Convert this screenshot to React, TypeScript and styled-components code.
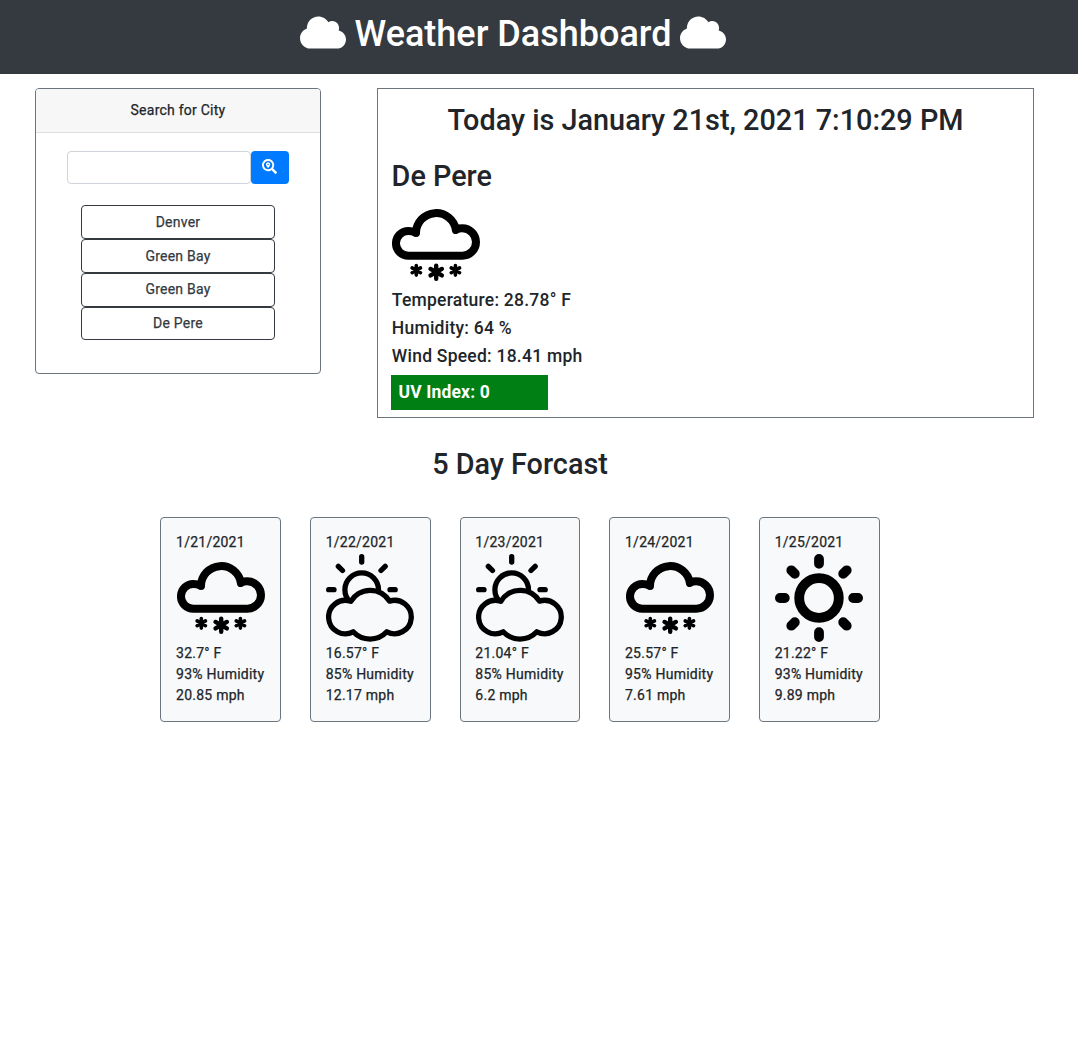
import React from "react";
import styled, { createGlobalStyle } from "styled-components";
import { FaCloud, FaSearchLocation } from "react-icons/fa";

const GlobalStyle = createGlobalStyle`
  *, *::before, *::after { box-sizing: border-box; }
  html { font-size: 14px; }
  body {
    margin: 0;
    background: #fff;
    color: #212529;
    font-family: Roboto, "Liberation Sans", sans-serif;
    font-size: 1rem;
    font-weight: 400;
    line-height: 1.5;
    letter-spacing: 0.24px;
    -webkit-text-stroke-width: 0.25px;
  }
  h1, h2, h3, p {
    margin: 0;
    font-weight: 500;
    line-height: 1.2;
    -webkit-text-stroke-width: 0;
  }
`;

const Header = styled.header`
  display: flex;
  justify-content: center;
  height: 74px;
  padding: 11px 52px 0 0;
  background: #343a40;
  color: #fff;
`;

const Title = styled.h1`
  display: flex;
  gap: 9px;
  height: 44px;
  font-size: 36px;
  line-height: 46px;
  letter-spacing: 0;
  white-space: nowrap;
`;

const CloudIcon = styled(FaCloud)`
  width: 46px;
  height: 37px;
  margin-top: 3px;
`;

const Columns = styled.div`
  display: flex;
  align-items: flex-start;
  gap: 56px;
  padding: 14px 44px 0 35px;
`;

const SearchCard = styled.section`
  width: 286px;
  height: 286px;
  border: 1px solid #6c757d;
  border-radius: 4px;
  overflow: hidden;
`;

const SearchHeading = styled.div`
  height: 44px;
  padding-top: 11px;
  border-bottom: 1px solid #dfdfdf;
  background: #f7f7f7;
  text-align: center;
`;

const SearchForm = styled.div`
  display: flex;
  padding: 18px 31px 0;
`;

const SearchInput = styled.input`
  width: 184px;
  height: 33px;
  padding: 5px 10px;
  border: 1px solid #ced4da;
  border-radius: 4px;
  background: #fff;
  font: inherit;
  outline: none;
`;

const SearchButton = styled.button`
  display: flex;
  justify-content: center;
  width: 38px;
  height: 33px;
  padding: 8px 1px 0 0;
  border: 0;
  border-radius: 4px;
  background: #007bff;
  color: #fff;
  font-size: 15px;
`;

const CityList = styled.div`
  display: flex;
  flex-direction: column;
  width: 194px;
  margin: 21.2px auto 0;
`;

const CityButton = styled.button`
  height: 33.8px;
  padding: 0.5px 0 0;
  border: 1px solid #343a40;
  border-radius: 4px;
  background: transparent;
  color: #343a40;
  font: inherit;
  letter-spacing: inherit;
`;

const TodayPanel = styled.main`
  flex: 1;
  height: 330px;
  padding: 14px 13px 0;
  border: 1px solid #6c757d;
`;

const Heading = styled.h2<{ $center?: boolean }>`
  height: 34px;
  font-size: 28.8px;
  line-height: 34px;
  letter-spacing: 0;
  text-align: ${(p) => (p.$center ? "center" : "left")};
`;

const CityName = styled(Heading)`
  margin: 22px 0 8px;
  padding-left: 0.6px;
`;

const Reading = styled.p`
  height: 21px;
  margin-bottom: 7px;
  padding-left: 0.8px;
  font-size: 17.5px;
  line-height: 21px;
  letter-spacing: 0.24px;
`;

const Readings = styled.div`
  padding-top: 1px;
`;

const WeatherIcon = styled.svg`
  display: block;
  flex: none;
  width: 88px;
  height: 88px;
  margin-left: 0.4px;
  fill: none;
  stroke: #000;
  stroke-linecap: round;
  stroke-linejoin: round;
`;

const TodayIcon = styled.div`
  padding-left: 0.6px;
`;

const UvBadge = styled.div`
  width: 157px;
  height: 35px;
  margin-top: 8px;
  padding-left: 7.5px;
  background: #008014;
  color: #fff;
  font-size: 17.5px;
  font-weight: 700;
  line-height: 34px;
  letter-spacing: 0.15px;
  -webkit-text-stroke-width: 0;
`;

const Forecast = styled.section`
  width: 1040px;
  padding-top: 29px;
`;

const ForecastRow = styled.div`
  display: grid;
  grid-template-columns: repeat(5, 120.67px);
  column-gap: 29px;
  justify-content: center;
  margin-top: 36px;
`;

const DayCard = styled.article`
  height: 205px;
  padding: 14px 0 0 14.7px;
  border: 1px solid #6c757d;
  border-radius: 4px;
  background: #f8f9fa;
  white-space: nowrap;
`;

const DayLine = styled.div`
  height: 21px;
`;

const DayIcon = styled.div`
  height: 90px;
  padding: 1px 0 0 0.3px;
`;

type Kind = "snow" | "partly" | "sun";

const Flake = ({ x, y, r, w }: { x: number; y: number; r: number; w: number }) => (
  <path
    transform={`translate(${x} ${y})`}
    strokeWidth={w}
    d={`M0 ${-r}V${r}M${-r * 0.87} ${-r / 2}L${r * 0.87} ${r / 2}M${r * 0.87} ${-r / 2}L${-r * 0.87} ${r / 2}`}
  />
);

const Snow = () => (
  <WeatherIcon viewBox="0 0 88 88">
    <path
      strokeWidth="8"
      d="M23.6 31.6C21 30.3 18.7 30 16.3 30A12.35 12.35 0 0 0 16.3 54.7H70.3A13.7 13.7 0 0 0 70.3 27.3C68 27.3 66 27.5 64 28.4"
    />
    <path strokeWidth="8" d="M24 31.8A20.08 20.08 0 0 1 63.9 29" />
    <Flake x={24.3} y={69.3} r={4.8} w={3.6} />
    <Flake x={44.2} y={71.2} r={6.5} w={4.4} />
    <Flake x={63.4} y={69.3} r={4.8} w={3.6} />
  </WeatherIcon>
);

const PartlyCloudy = () => (
  <WeatherIcon viewBox="0 0 88 88" strokeWidth="5.3">
    <path d="M35.7 2.7V8M2.7 35.7H8M64 35.7H69.2M12.3 12.3L16.5 16.5M59.2 12.3L55 16.5" />
    <circle cx="35.7" cy="35.7" r="16.8" />
    <path
      fill="#f8f9fa"
      d="M24.8 47.3A16.7 16.7 0 1 0 27.2 77.8A23 23 0 0 0 60.8 77.8A16.7 16.7 0 1 0 63.5 47.1A22.6 22.6 0 0 0 24.8 47.3Z"
    />
  </WeatherIcon>
);

const Sun = () => (
  <WeatherIcon viewBox="0 0 88 88" strokeWidth="9.8">
    <circle cx="44" cy="44" r="19.8" />
    <path d="M44 4.9V9.8M44 78.2V83.1M4.9 44H9.8M78.2 44H83.1M16.3 16.3L19.8 19.8M71.7 16.3L68.2 19.8M16.3 71.7L19.8 68.2M71.7 71.7L68.2 68.2" />
  </WeatherIcon>
);

const icons: Record<Kind, React.FC> = { snow: Snow, partly: PartlyCloudy, sun: Sun };

const cities = ["Denver", "Green Bay", "Green Bay", "De Pere"];

const days: { date: string; kind: Kind; temp: string; humidity: string; wind: string }[] = [
  { date: "1/21/2021", kind: "snow", temp: "32.7", humidity: "93", wind: "20.85" },
  { date: "1/22/2021", kind: "partly", temp: "16.57", humidity: "85", wind: "12.17" },
  { date: "1/23/2021", kind: "partly", temp: "21.04", humidity: "85", wind: "6.2" },
  { date: "1/24/2021", kind: "snow", temp: "25.57", humidity: "95", wind: "7.61" },
  { date: "1/25/2021", kind: "sun", temp: "21.22", humidity: "93", wind: "9.89" },
];

export default function App() {
  return (
    <>
      <GlobalStyle />
      <Header>
        <Title>
          <CloudIcon />
          <span>Weather Dashboard</span>
          <CloudIcon />
        </Title>
      </Header>
      <Columns>
        <SearchCard>
          <SearchHeading>Search for City</SearchHeading>
          <SearchForm>
            <SearchInput aria-label="City" />
            <SearchButton aria-label="Search">
              <FaSearchLocation />
            </SearchButton>
          </SearchForm>
          <CityList>
            {cities.map((city, i) => (
              <CityButton key={i}>{city}</CityButton>
            ))}
          </CityList>
        </SearchCard>
        <TodayPanel>
          <Heading $center>Today is January 21st, 2021 7:10:29 PM</Heading>
          <CityName>De Pere</CityName>
          <TodayIcon>
            <Snow />
          </TodayIcon>
          <Readings>
            <Reading>Temperature: 28.78° F</Reading>
            <Reading>Humidity: 64 %</Reading>
            <Reading>Wind Speed: 18.41 mph</Reading>
          </Readings>
          <UvBadge>UV Index: 0</UvBadge>
        </TodayPanel>
      </Columns>
      <Forecast>
        <Heading $center>5 Day Forcast</Heading>
        <ForecastRow>
          {days.map((day) => {
            const Icon = icons[day.kind];
            return (
              <DayCard key={day.date}>
                <DayLine>{day.date}</DayLine>
                <DayIcon>
                  <Icon />
                </DayIcon>
                <DayLine>{day.temp}° F</DayLine>
                <DayLine>{day.humidity}% Humidity</DayLine>
                <DayLine>{day.wind} mph</DayLine>
              </DayCard>
            );
          })}
        </ForecastRow>
      </Forecast>
    </>
  );
}
